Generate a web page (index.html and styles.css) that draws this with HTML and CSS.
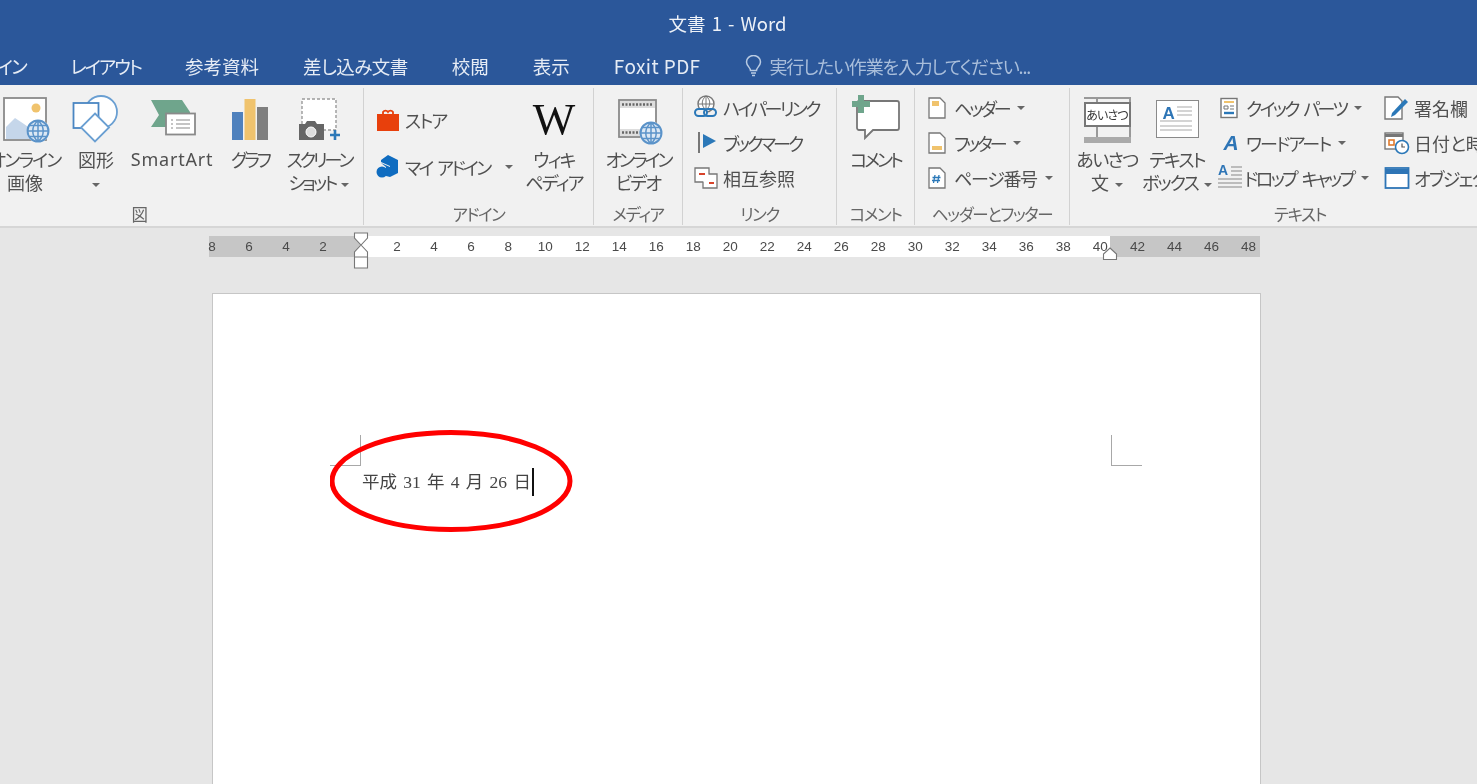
FILE: index.html
```html
<!DOCTYPE html>
<html lang="ja">
<head>
<meta charset="utf-8">
<title>文書 1 - Word</title>
<link rel="stylesheet" href="styles.css">
</head>
<body>
<svg class="defs" width="0" height="0" aria-hidden="true">
  <symbol id="globe" viewBox="0 0 24 24">
    <circle cx="12" cy="12" r="11.500" fill="#fff"/>
    <circle cx="12" cy="12" r="10.500" fill="#dce8f4" stroke="#5b93c9" stroke-width="2"/>
    <path d="M12 1.500v21M1.500 12h21M3.500 6.500h17M3.500 17.500h17M12 1.500c-7 6-7 15 0 21M12 1.500c7 6 7 15 0 21" fill="none" stroke="#5b93c9" stroke-width="1.500"/>
  </symbol>
</svg>
<div class="app">
  <header class="titlebar">
    <div class="title">文書 1 - Word</div>
    <nav class="tabs">
      <span class="tab tab-cut">デザイン</span>
      <span class="tab tab-kana">レイアウト</span>
      <span class="tab">参考資料</span>
      <span class="tab tab-tight">差し込み文書</span>
      <span class="tab">校閲</span>
      <span class="tab">表示</span>
      <span class="tab tab-latin">Foxit PDF</span>
      <span class="search">
        <svg class="bulb" width="17" height="22" viewBox="0 0 17 22"><path d="M5.500 15.500c0-3-4-4.500-4-8.500a7 6.500 0 0 1 14 0c0 4-4 5.500-4 8.500zM6 18h5M7 20.500h3" fill="none" stroke="#b9cbe3" stroke-width="1.500"/></svg>
        <span class="search-text">実行したい作業を入力してください...</span>
      </span>
    </nav>
  </header>

  <section class="ribbon">
    <div class="group g-image">
      <div class="group-body">
        <div class="big w70">
          <div class="icon"><svg width="50" height="50" viewBox="0 0 50 50"><rect x="4" y="3" width="42" height="42" fill="#fff" stroke="#8a8a8a" stroke-width="1.800"/><circle cx="36" cy="13" r="4.500" fill="#f0c36d"/><path d="M6 44V32l9-9 9 6 7 5v10z" fill="#c5d6ea"/><use href="#globe" x="26" y="24" width="24" height="24"/></svg></div>
          <div class="lbl kana">オンライン</div><div class="lbl">画像</div>
        </div>
        <div class="big w72">
          <div class="icon"><svg width="48" height="48" viewBox="0 0 48 48"><circle cx="29" cy="17" r="16" fill="#fff" stroke="#6a9fd2" stroke-width="1.800"/><rect x="1.500" y="8" width="25" height="25" fill="#fff" stroke="#4a86c2" stroke-width="1.800"/><path d="M23 18.500l14 14-14 14-14-14z" fill="#fff" stroke="#6a9fd2" stroke-width="1.800"/></svg></div>
          <div class="lbl">図形</div><div class="lbl"><i class="caret"></i></div>
        </div>
        <div class="big w80">
          <div class="icon"><svg width="48" height="42" viewBox="0 0 48 42"><path d="M3 5h31l8 12v15H3l8-12z" fill="#6fa58c"/><rect x="18" y="18.500" width="29" height="21" fill="#fff" stroke="#8a8a8a" stroke-width="1.800"/><path d="M23 25h2M28 25h14M23 29h2M28 29h14M23 33h2M28 33h14" stroke="#8a8a8a" stroke-width="1.200"/></svg></div>
          <div class="lbl latin">SmartArt</div>
        </div>
        <div class="big w76">
          <div class="icon"><svg width="36" height="46" viewBox="0 -4 36 46"><rect x="0" y="13" width="11" height="28" fill="#4f81bd"/><rect x="12.500" y="0" width="11" height="41" fill="#f0c36d"/><rect x="25" y="8" width="11" height="33" fill="#7f7f7f"/></svg></div>
          <div class="lbl kana-t">グラフ</div>
        </div>
        <div class="big w62">
          <div class="icon"><svg width="46" height="47" viewBox="0 -3 46 47"><rect x="6" y="1" width="34" height="31" fill="#fff" stroke="#9a9a9a" stroke-width="1.400" stroke-dasharray="3 2"/><path d="M3 26h6l2-3h8l2 3h7v16H3z" fill="#666"/><circle cx="15" cy="34" r="5" fill="#ddd" stroke="#fff" stroke-width="1"/><path d="M39 32v10M34 37h10" stroke="#2b78b8" stroke-width="2.600"/></svg></div>
          <div class="lbl kana-t">スクリーン</div><div class="lbl small-kana">ショット<i class="caret caret-l"></i></div>
        </div>
      </div>
      <div class="group-label">図</div>
    </div>

    <div class="group g-addin">
      <div class="group-body">
        <div class="col col-addin">
          <div class="row row-tall"><svg class="ico" width="24" height="26" viewBox="0 0 24 26"><path d="M7 8V5a3 3 0 0 1 5 0 3 3 0 0 1 5 0v3" fill="none" stroke="#e8400c" stroke-width="1.800"/><path d="M1 7h22v17H1z" fill="#e8400c"/></svg><span class="kana">ストア</span></div>
          <div class="row row-tall"><svg class="ico" width="24" height="26" viewBox="0 0 24 26"><path d="M12 1l10 5v13l-8 4V12L5 8V6z" fill="#0f6cc0"/><path d="M5 9l9 4v10l-4-1V13z" fill="#0f6cc0"/><circle cx="6" cy="18" r="5.500" fill="#0f6cc0"/></svg><span class="kana-s">マイ アドイン</span><i class="caret caret-addin"></i></div>
        </div>
        <div class="big w60">
          <div class="icon icon-w"><span class="wiki">W</span></div>
          <div class="lbl kana">ウィキ</div><div class="lbl kana">ペディア</div>
        </div>
      </div>
      <div class="group-label">アドイン</div>
    </div>

    <div class="group g-media">
      <div class="group-body body-center">
        <div class="big w80">
          <div class="icon"><svg width="52" height="50" viewBox="0 0 52 50"><rect x="7" y="5" width="37" height="37" fill="#fff" stroke="#8a8a8a" stroke-width="1.800"/><path d="M8 6h35v7H8zM8 34h35v7H8z" fill="#ddd"/><path d="M10 9.500h30M10 37.500h30" stroke="#666" stroke-width="2.400" stroke-dasharray="2 1.500"/><use href="#globe" x="27" y="26" width="24" height="24"/></svg></div>
          <div class="lbl kana-t">オンライン</div><div class="lbl kana">ビデオ</div>
        </div>
      </div>
      <div class="group-label">メディア</div>
    </div>

    <div class="group g-link">
      <div class="group-body">
        <div class="col col-link">
          <div class="row"><svg class="ico" width="24" height="26" viewBox="0 0 24 26"><circle cx="12" cy="9" r="8" fill="#fff" stroke="#777" stroke-width="1.400"/><path d="M12 1v14M4 9h16M12 1c-5 4-5 10 0 14M12 1c5 4 5 10 0 14" fill="none" stroke="#777"/><rect x="1" y="14" width="12" height="7" rx="3.500" fill="#f1f1f1" stroke="#2b78b8" stroke-width="2"/><rect x="10" y="14" width="12" height="7" rx="3.500" fill="none" stroke="#2b78b8" stroke-width="2"/></svg><span class="kana-l">ハイパーリンク</span></div>
          <div class="row"><svg class="ico" width="24" height="24" viewBox="0 0 24 24"><path d="M5 1v21" stroke="#777" stroke-width="2"/><path d="M9 3l13 7-13 7z" fill="#2b78b8"/></svg><span class="kana-t">ブックマーク</span></div>
          <div class="row"><svg class="ico" width="24" height="24" viewBox="0 0 24 24"><path d="M1 2h14v14H1z" fill="#fff" stroke="#777" stroke-width="1.300"/><path d="M15 8h8v14H9v-6" fill="#fff" stroke="#777" stroke-width="1.300"/><path d="M5 8h6M15 17h5" stroke="#d8442b" stroke-width="2.200"/></svg><span>相互参照</span></div>
        </div>
      </div>
      <div class="group-label">リンク</div>
    </div>

    <div class="group g-comment">
      <div class="group-body body-center">
        <div class="big w76">
          <div class="icon"><svg width="48" height="46" viewBox="0 0 48 46"><path d="M7 6h38a2 2 0 0 1 2 2v25a2 2 0 0 1-2 2H21l-8 8v-8H7a2 2 0 0 1-2-2V8a2 2 0 0 1 2-2z" fill="#fff" stroke="#777" stroke-width="1.800"/><path d="M9 0v18M0 9h18" stroke="#6fa58c" stroke-width="6"/></svg></div>
          <div class="lbl kana-t">コメント</div>
        </div>
      </div>
      <div class="group-label">コメント</div>
    </div>

    <div class="group g-header">
      <div class="group-body">
        <div class="col col-header">
          <div class="row"><svg class="ico" width="18" height="22" viewBox="0 0 18 22"><path d="M1 1h11l5 5v15H1z" fill="#fff" stroke="#777" stroke-width="1.300"/><rect x="4" y="4" width="7" height="5" fill="#f0c36d"/></svg><span class="kana-t">ヘッダー</span><i class="caret caret-h"></i></div>
          <div class="row"><svg class="ico" width="18" height="22" viewBox="0 0 18 22"><path d="M1 1h11l5 5v15H1z" fill="#fff" stroke="#777" stroke-width="1.300"/><rect x="4" y="14" width="10" height="4" fill="#f0c36d"/></svg><span class="kana-t">フッター</span><i class="caret caret-h"></i></div>
          <div class="row"><svg class="ico" width="18" height="22" viewBox="0 0 18 22"><path d="M1 1h11l5 5v15H1z" fill="#fff" stroke="#777" stroke-width="1.300"/><path d="M7 8l-1.500 8M11 8l-1.500 8M4.500 10.500h8M4 13.500h8" stroke="#2b78b8" stroke-width="1.300"/></svg><span class="kana-p">ページ番号</span><i class="caret caret-h"></i></div>
        </div>
      </div>
      <div class="group-label">ヘッダーとフッター</div>
    </div>

    <div class="group g-text">
      <div class="group-body">
        <div class="big w74">
          <div class="icon"><div class="greet"><span class="greet-card">あいさつ</span></div></div>
          <div class="lbl hira">あいさつ</div><div class="lbl">文<i class="caret caret-l"></i></div>
        </div>
        <div class="big w66">
          <div class="icon"><div class="tbox"><span class="tbox-a">A</span><svg class="tbox-lines" width="39" height="33" viewBox="0 0 39 33"><path d="M20 6h15M20 10h15M20 14h15M3 20h32M3 25h32M3 29h32" stroke="#aaa" stroke-width="1.200"/></svg></div></div>
          <div class="lbl kana">テキスト</div><div class="lbl kana">ボックス<i class="caret caret-l"></i></div>
        </div>
        <div class="col col-quick">
          <div class="row"><svg class="ico" width="18" height="22" viewBox="0 0 18 22"><rect x="1" y="1.500" width="16" height="19" fill="#fff" stroke="#777" stroke-width="1.400"/><path d="M4 5h10" stroke="#f0c36d" stroke-width="2"/><path d="M4 9h4v3H4zM10 9h4M10 12h4" fill="none" stroke="#777"/><path d="M4 16h10" stroke="#2b78b8" stroke-width="2.400"/></svg><span class="kana-s">クイック パーツ</span><i class="caret caret-h"></i></div>
          <div class="row"><span class="wa">A</span><span class="kana">ワードアート</span><i class="caret caret-h"></i></div>
          <div class="row"><span class="dc"><b class="dc-a">A</b><svg class="dc-lines" width="26" height="25" viewBox="0 0 26 25"><path d="M14 2h11M14 6h11M14 10h11M1 14h24M1 18h24M1 22h24" stroke="#aaa" stroke-width="1.300"/></svg></span><span class="kana-s">ドロップ キャップ</span><i class="caret caret-h"></i></div>
        </div>
        <div class="col col-sign">
          <div class="row"><svg class="ico" width="26" height="24" viewBox="0 0 26 24"><path d="M1 1h13l4 4v18H1z" fill="#fff" stroke="#777" stroke-width="1.400"/><path d="M8 17L21 3l3 3-13 13-4 2z" fill="#2b78b8"/></svg><span>署名欄</span></div>
          <div class="row"><svg class="ico" width="26" height="24" viewBox="0 0 26 24"><rect x="1" y="2" width="18" height="16" fill="#fff" stroke="#777" stroke-width="1.400"/><path d="M1 3h18v3H1z" fill="#777"/><rect x="5" y="9" width="5" height="5" fill="none" stroke="#e07a2c" stroke-width="1.600"/><circle cx="18" cy="16" r="6.500" fill="#fff" stroke="#2b78b8" stroke-width="1.600"/><path d="M18 12.500V16h3" fill="none" stroke="#555" stroke-width="1.200"/></svg><span>日付と時刻</span></div>
          <div class="row"><svg class="ico" width="26" height="24" viewBox="0 0 26 24"><rect x="1.500" y="2" width="23" height="20" fill="#fff" stroke="#2e75b6" stroke-width="1.800"/><path d="M2 3h22v5H2z" fill="#2e75b6"/></svg><span class="kana">オブジェクト</span></div>
        </div>
      </div>
      <div class="group-label">テキスト</div>
    </div>
  </section>

  <main class="workspace">
    <div class="ruler">
      <span>8</span><span>6</span><span>4</span><span>2</span><span></span><span>2</span><span>4</span><span>6</span><span>8</span><span>10</span><span>12</span><span>14</span><span>16</span><span>18</span><span>20</span><span>22</span><span>24</span><span>26</span><span>28</span><span>30</span><span>32</span><span>34</span><span>36</span><span>38</span><span>40</span><span>42</span><span>44</span><span>46</span><span>48</span>
      <svg class="indent-left" width="16" height="38" viewBox="0 0 16 38"><path d="M1.500 1h13v5L8 13 1.500 6zM8 13l6.500 7v5h-13v-5zM1.500 25h13v11h-13z" fill="#fff" stroke="#777" stroke-width="1.100"/></svg>
      <svg class="indent-right" width="16" height="14" viewBox="0 0 16 14"><path d="M8 1l6.500 6v5.500h-13V7z" fill="#fff" stroke="#777" stroke-width="1.100"/></svg>
    </div>
    <article class="page">
      <div class="crops">
        <i class="crop crop-l"></i>
        <i class="crop crop-r"></i>
      </div>
      <p class="line"><span>平成 31 年 4 月 26 日</span><i class="cursor"></i></p>
      <svg class="mark" width="250" height="110" viewBox="0 0 250 110"><ellipse cx="121" cy="51" rx="119" ry="48.500" fill="none" stroke="#f00" stroke-width="5"/></svg>
    </article>
  </main>
</div>
</body>
</html>
```
FILE: styles.css
```css
* { box-sizing: border-box; }
html, body { margin: 0; height: 100%; overflow: hidden; }
body { font-family: "Noto Sans CJK JP", "Noto Sans", sans-serif; font-size: 18px; color: #505050; background: #e6e6e6; font-feature-settings: "palt" 1; }
.defs { position: absolute; }
.app { width: 1477px; height: 784px; overflow: hidden; display: flex; flex-direction: column; filter: blur(0.5px); }

.titlebar { height: 85px; flex: none; background: #2b579a; color: #fff; display: flex; flex-direction: column; }
.title { height: 47px; line-height: 47px; padding-right: 22px; text-align: center; font-size: 18.500px; font-feature-settings: normal; word-spacing: 2px; color: #eef2f8; }
.tabs { display: flex; align-items: center; height: 38px; margin-left: -35.500px; gap: 44px; white-space: nowrap; color: #e6ecf5; }
.tab { font-size: 18.500px; line-height: 38px; }
.tab-cut { letter-spacing: -1.500px; }
.tab-kana { letter-spacing: -2px; }
.tab-tight { letter-spacing: -.5px; }
.tab-latin { font-size: 19px; letter-spacing: .4px; }
.search { display: flex; align-items: center; gap: 8px; color: #a9bedb; }
.search-text { letter-spacing: -1.200px; }
.bulb { flex: none; }

.ribbon { height: 143px; flex: none; display: flex; background: #f1f1f1; border-bottom: 2px solid #d6d6d6; overflow: hidden; }
.group { flex: none; height: 137px; margin-top: 3px; display: flex; flex-direction: column; border-right: 1px solid #d2d2d2; }
.group-body { flex: none; height: 115px; padding-top: 2px; display: flex; }
.body-center { justify-content: center; }
.group-label { text-align: center; font-size: 16.500px; letter-spacing: -1.400px; line-height: 22px; height: 22px; color: #666; }
.g-image { width: 449px; margin-left: -85px; }
.g-image .group-body { padding-left: 75px; }
.g-addin { width: 230px; }
.g-media { width: 89px; }
.g-link { width: 154px; }
.g-comment { width: 78px; }
.g-header { width: 155px; }
.g-text { width: 460px; border-right: 0; }

.big { flex: none; display: flex; flex-direction: column; align-items: center; white-space: nowrap; }
.w60 { width: 60px; } .w62 { width: 62px; } .w66 { width: 66px; } .w70 { width: 70px; } .w72 { width: 72px; } .w74 { width: 74px; } .w76 { width: 76px; } .w80 { width: 80px; }
.icon { height: 58px; display: flex; align-items: flex-start; justify-content: center; padding-top: 5px; }
.lbl { height: 23px; line-height: 23px; }
.kana { letter-spacing: -1.800px; }
.kana-t { letter-spacing: -3px; }
.kana-l { letter-spacing: -2.600px; }
.kana-s { letter-spacing: -2.600px; word-spacing: 4px; }
.kana-p { letter-spacing: -1.300px; }
.hira { letter-spacing: -1.500px; }
.small-kana { letter-spacing: -2.800px; }
.latin { font-family: "Noto Sans", sans-serif; font-size: 18px; letter-spacing: .8px; }

.col { flex: none; display: flex; flex-direction: column; white-space: nowrap; }
.row { height: 35px; display: flex; align-items: center; }
.row-tall { height: 47px; }
.ico { flex: none; margin-right: 5px; }
.col-addin { width: 160px; padding: 6px 0 0 12px; }
.col-link { padding-left: 11px; }
.col-header { padding-left: 13px; }
.col-header .ico { margin-right: 8px; }
.col-quick { width: 166px; margin-left: 8px; }
.col-quick .ico { margin: 0 8px 0 2px; }
.col-sign { width: 200px; }
.col-sign .ico { margin-right: 4px; }
.caret { display: inline-block; width: 0; height: 0; border: 4px solid transparent; border-top: 4.500px solid #666; border-bottom: 0; vertical-align: middle; }
.caret-l { margin-left: 6px; }
.caret-h { margin-left: 8px; }
.caret-addin { margin-left: 15px; }

.icon-w { padding-top: 0; }
.wiki { font-family: "Liberation Serif", serif; font-size: 45px; line-height: 58px; color: #111; letter-spacing: 0; }
.greet { width: 47px; height: 46px; position: relative; margin-top: 2px; background: linear-gradient(to right, transparent 12px, #999 12px, #999 14px, #f1f1f1 14px, #f1f1f1 45px, #999 45px); border-top: 2px solid #999; border-bottom: 6px solid #aaa; }
.greet-card { position: absolute; left: 0; top: 3px; width: 47px; height: 25px; background: #fff; border: 2px solid #777; box-shadow: inset 0 0 0 1px #fff; font-size: 12px; line-height: 21px; text-align: center; color: #333; white-space: nowrap; letter-spacing: -.8px; }
.tbox { width: 43px; height: 38px; margin-top: 5px; background: #fff; border: 1.500px solid #8a8a8a; position: relative; }
.tbox-a { position: absolute; left: 6px; top: 3px; font-family: "Liberation Sans", sans-serif; font-weight: 700; font-size: 17px; line-height: 20px; color: #2e75b6; }
.tbox-lines { position: absolute; left: 0; top: 0; }
.wa { width: 26px; margin-right: 2px; font-family: "Liberation Sans", sans-serif; font-style: italic; font-weight: 700; font-size: 21px; color: #2e75b6; text-align: center; }
.dc { position: relative; width: 27px; height: 25px; flex: none; margin-left: -1px; }
.dc-a { position: absolute; left: 1px; top: -3px; font-family: "Liberation Sans", sans-serif; font-size: 14px; color: #2e75b6; }
.dc-lines { position: absolute; left: 0; top: 0; }

.workspace { flex: 1; min-height: 0; position: relative; background: #e6e6e6; padding-top: 8px; display: flex; flex-direction: column; }
.ruler { height: 21px; flex: none; margin-left: 209px; width: 1051px; display: flex; position: relative; background: linear-gradient(to right, #c6c6c6 151px, #fff 151px, #fff 901px, #c6c6c6 901px); font-family: "Liberation Sans", sans-serif; font-size: 13.500px; line-height: 21px; color: #4a4a4a; }
.ruler span { flex: none; width: 37.030px; text-align: center; }
.ruler span:first-child { margin-left: -15.500px; }
.indent-left { position: absolute; left: 144px; top: -4px; }
.indent-right { position: absolute; left: 893px; top: 11px; }

.page { margin: 36px 0 0 212px; width: 1049px; flex: 1; background: #fff; border: 1px solid #c6c6c6; border-bottom: 0; position: relative; }
.crops { display: flex; justify-content: space-between; width: 812px; margin: 141px 0 0 117px; height: 31px; }
.crop { display: block; width: 31px; height: 31px; }
.crop-l { border-right: 1px solid #a8a8a8; border-bottom: 1px solid #a8a8a8; }
.crop-r { border-left: 1px solid #a8a8a8; border-bottom: 1px solid #a8a8a8; }
.line { margin: 0 0 0 149px; height: 32px; line-height: 32px; display: flex; align-items: center; font-family: "Liberation Serif", "Noto Sans CJK JP", serif; font-size: 17.500px; word-spacing: 1.900px; font-feature-settings: normal; color: #444; }
.cursor { display: block; width: 2px; height: 28px; margin-left: 1px; background: #111; }
.mark { position: absolute; left: 117px; top: 136px; }
```
